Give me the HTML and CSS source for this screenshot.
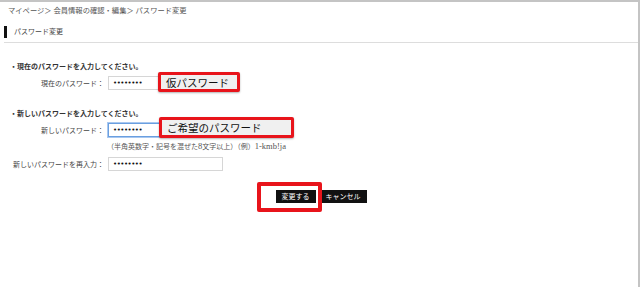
FILE: index.html
```html
<!DOCTYPE html>
<html lang="ja">
<head>
    <meta charset="UTF-8">
    <meta name="viewport" content="width=device-width, initial-scale=1.0">
    <title>パスワード変更</title>
    <link rel="stylesheet" href="styles.css">
</head>
<body>
    <div class="page">
        <div class="breadcrumb">マイページ＞ 会員情報の確認・編集＞ パスワード変更</div>
        <div class="title">
            <h1>パスワード変更</h1>
        </div>

        <form class="form">
            <div class="block">
                <p class="lead">・現在のパスワードを入力してください。</p>
                <div class="row">
                    <label>現在のパスワード：</label>
                    <div class="field">
                        <input type="password" value="password">
                        <span class="note note-current">仮パスワード</span>
                    </div>
                </div>
            </div>

            <div class="block">
                <p class="lead">・新しいパスワードを入力してください。</p>
                <div class="row">
                    <label>新しいパスワード：</label>
                    <div class="field">
                        <input type="password" class="focus" value="password">
                        <span class="note note-new">ご希望のパスワード</span>
                    </div>
                </div>
                <p class="hint">（半角英数字・記号を混ぜた<span class="latin">8</span>文字以上）（例）<span class="latin">1-kmb!ja</span></p>
                <div class="row">
                    <label>新しいパスワードを再入力：</label>
                    <div class="field">
                        <input type="password" value="password">
                    </div>
                </div>
            </div>

            <div class="actions">
                <span class="mark"></span>
                <button type="button" class="btn">変更する</button>
                <button type="button" class="btn">キャンセル</button>
            </div>
        </form>
    </div>
</body>
</html>
```

FILE: styles.css
```css
* {
    box-sizing: border-box;
}

body {
    margin: 0;
    background-color: #fff;
    font-family: "Liberation Serif", "Noto Sans CJK JP", serif;
    font-size: 7px;
    color: #444;
}

.page {
    height: 287px;
    border-top: 2px solid #c4c4c4;
    border-right: 2px solid #c4c4c4;
}

.breadcrumb {
    padding: 4px 8px 0;
    line-height: 10px;
    font-size: 7.3px;
    color: #555;
}

.title {
    margin: 10px 0 0 4px;
    padding-bottom: 4px;
    border-bottom: 1px solid #ddd;
}

h1 {
    margin: 0;
    height: 12px;
    line-height: 12px;
    border-left: 3px solid #111;
    padding-left: 7px;
    font-size: 7px;
    font-weight: normal;
    color: #444;
}

.block {
    margin-top: 19px;
}

.lead {
    margin: 0 0 4px;
    padding-left: 10px;
    line-height: 10px;
    font-weight: bold;
    color: #333;
}

.row {
    display: grid;
    grid-template-columns: 104px auto;
    column-gap: 4px;
    align-items: center;
    height: 14px;
}

.row label {
    text-align: right;
}

.field {
    position: relative;
    height: 14px;
}

.field input {
    display: block;
    width: 115px;
    height: 14px;
    margin: 0;
    padding: 0 4px;
    border: 1px solid #d6d6d6;
    font-family: "DejaVu Sans", sans-serif;
    font-size: 7px;
    letter-spacing: -0.5px;
    color: #111;
    outline: none;
}

.field input.focus {
    border-color: #6a9fe0;
    box-shadow: 0 0 0 1px #a9c8f0;
}

.hint {
    margin: 4px 0 5px 107px;
    line-height: 10px;
    color: #555;
}

.latin {
    font-size: 8.5px;
}

/* red annotation boxes laid over the form */
.note {
    position: absolute;
    display: flex;
    align-items: center;
    padding-left: 5px;
    border: 3px solid #e8141b;
    border-radius: 2px;
    background-color: #f0f0f0;
    font-family: "Noto Sans CJK JP", sans-serif;
    font-size: 10.5px;
    color: #111;
    box-shadow: 0 1px 2px rgba(0, 0, 0, 0.3);
}

.note-current {
    left: 50px;
    top: -4px;
    width: 82px;
    height: 20px;
}

.note-new {
    left: 51px;
    top: -6px;
    width: 135px;
    height: 21px;
}

.actions {
    position: relative;
    display: flex;
    justify-content: center;
    gap: 4px;
    margin-top: 19px;
    padding-left: 4px;
}

.btn {
    height: 13px;
    padding: 0 6px;
    border: none;
    background-color: #111;
    color: #fff;
    font-family: "Noto Sans CJK JP", sans-serif;
    font-size: 7px;
    line-height: 13px;
}

.mark {
    position: absolute;
    left: 257px;
    top: -8px;
    width: 65px;
    height: 30px;
    border: 4px solid #e8141b;
    border-radius: 2px;
}
```
